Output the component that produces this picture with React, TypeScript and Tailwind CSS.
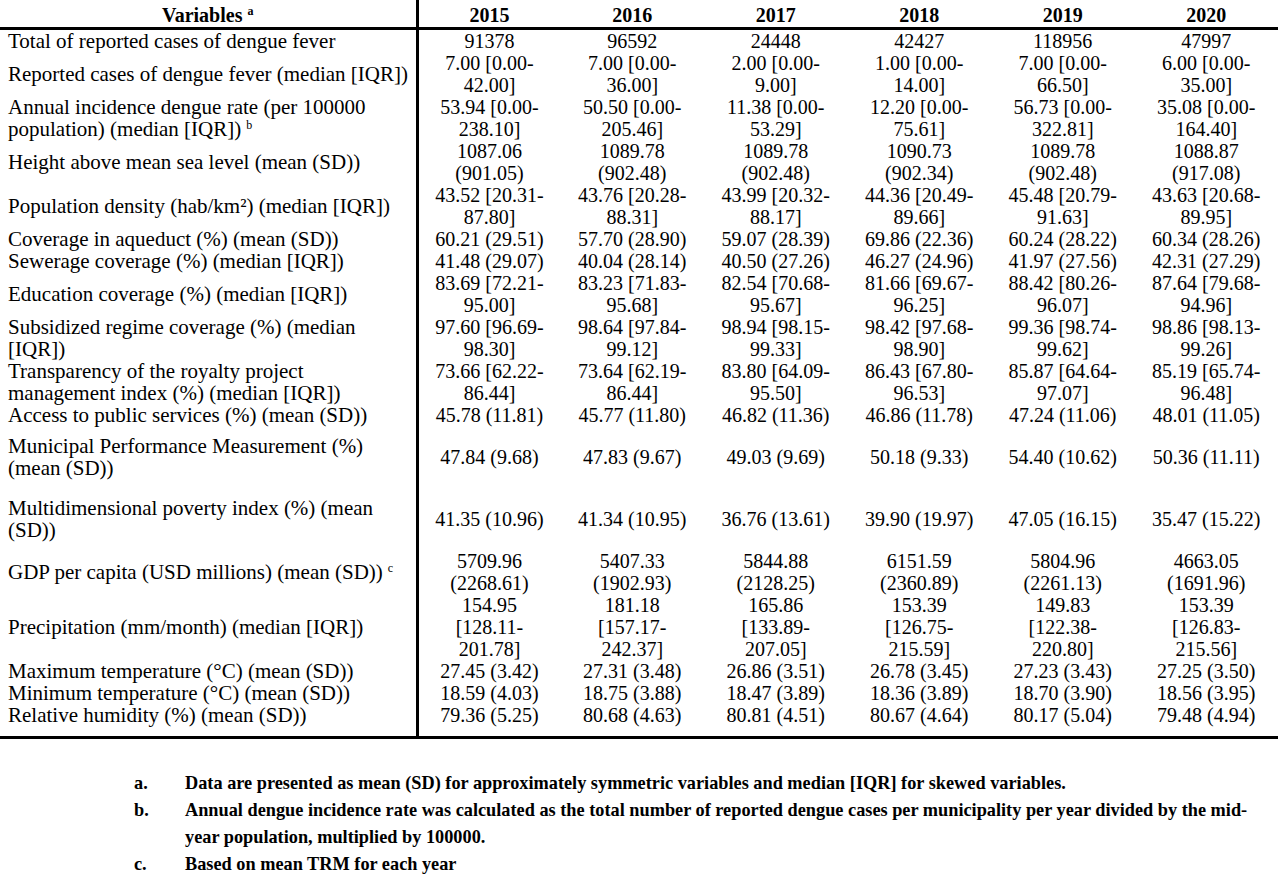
const years = ['2015', '2016', '2017', '2018', '2019', '2020'];

type Row = {
  label: string[];
  sup?: string;
  values: string[][];
  pad?: string;
};

const rows: Row[] = [
  {
    label: ['Total of reported cases of dengue fever'],
    values: [['91378'], ['96592'], ['24448'], ['42427'], ['118956'], ['47997']],
  },
  {
    label: ['Reported cases of dengue fever (median [IQR])'],
    values: [
      ['7.00 [0.00-', '42.00]'],
      ['7.00 [0.00-', '36.00]'],
      ['2.00 [0.00-', '9.00]'],
      ['1.00 [0.00-', '14.00]'],
      ['7.00 [0.00-', '66.50]'],
      ['6.00 [0.00-', '35.00]'],
    ],
  },
  {
    label: ['Annual incidence dengue rate (per 100000', 'population) (median [IQR])'],
    sup: 'b',
    values: [
      ['53.94 [0.00-', '238.10]'],
      ['50.50 [0.00-', '205.46]'],
      ['11.38 [0.00-', '53.29]'],
      ['12.20 [0.00-', '75.61]'],
      ['56.73 [0.00-', '322.81]'],
      ['35.08 [0.00-', '164.40]'],
    ],
  },
  {
    label: ['Height above mean sea level (mean (SD))'],
    values: [
      ['1087.06', '(901.05)'],
      ['1089.78', '(902.48)'],
      ['1089.78', '(902.48)'],
      ['1090.73', '(902.34)'],
      ['1089.78', '(902.48)'],
      ['1088.87', '(917.08)'],
    ],
  },
  {
    label: ['Population density (hab/km²) (median [IQR])'],
    values: [
      ['43.52 [20.31-', '87.80]'],
      ['43.76 [20.28-', '88.31]'],
      ['43.99 [20.32-', '88.17]'],
      ['44.36 [20.49-', '89.66]'],
      ['45.48 [20.79-', '91.63]'],
      ['43.63 [20.68-', '89.95]'],
    ],
  },
  {
    label: ['Coverage in aqueduct (%) (mean (SD))'],
    values: [['60.21 (29.51)'], ['57.70 (28.90)'], ['59.07 (28.39)'], ['69.86 (22.36)'], ['60.24 (28.22)'], ['60.34 (28.26)']],
  },
  {
    label: ['Sewerage coverage (%) (median [IQR])'],
    values: [['41.48 (29.07)'], ['40.04 (28.14)'], ['40.50 (27.26)'], ['46.27 (24.96)'], ['41.97 (27.56)'], ['42.31 (27.29)']],
  },
  {
    label: ['Education coverage (%) (median [IQR])'],
    values: [
      ['83.69 [72.21-', '95.00]'],
      ['83.23 [71.83-', '95.68]'],
      ['82.54 [70.68-', '95.67]'],
      ['81.66 [69.67-', '96.25]'],
      ['88.42 [80.26-', '96.07]'],
      ['87.64 [79.68-', '94.96]'],
    ],
  },
  {
    label: ['Subsidized regime coverage (%) (median', '[IQR])'],
    values: [
      ['97.60 [96.69-', '98.30]'],
      ['98.64 [97.84-', '99.12]'],
      ['98.94 [98.15-', '99.33]'],
      ['98.42 [97.68-', '98.90]'],
      ['99.36 [98.74-', '99.62]'],
      ['98.86 [98.13-', '99.26]'],
    ],
  },
  {
    label: ['Transparency of the royalty project', 'management index (%) (median [IQR])'],
    values: [
      ['73.66 [62.22-', '86.44]'],
      ['73.64 [62.19-', '86.44]'],
      ['83.80 [64.09-', '95.50]'],
      ['86.43 [67.80-', '96.53]'],
      ['85.87 [64.64-', '97.07]'],
      ['85.19 [65.74-', '96.48]'],
    ],
  },
  {
    label: ['Access to public services (%) (mean (SD))'],
    values: [['45.78 (11.81)'], ['45.77 (11.80)'], ['46.82 (11.36)'], ['46.86 (11.78)'], ['47.24 (11.06)'], ['48.01 (11.05)']],
  },
  {
    label: ['Municipal Performance Measurement (%)', '(mean (SD))'],
    values: [['47.84 (9.68)'], ['47.83 (9.67)'], ['49.03 (9.69)'], ['50.18 (9.33)'], ['54.40 (10.62)'], ['50.36 (11.11)']],
    pad: 'py-[9px]',
  },
  {
    label: ['Multidimensional poverty index (%) (mean', '(SD))'],
    values: [['41.35 (10.96)'], ['41.34 (10.95)'], ['36.76 (13.61)'], ['39.90 (19.97)'], ['47.05 (16.15)'], ['35.47 (15.22)']],
    pad: 'py-[9px]',
  },
  {
    label: ['GDP per capita (USD millions) (mean (SD))'],
    sup: 'c',
    values: [
      ['5709.96', '(2268.61)'],
      ['5407.33', '(1902.93)'],
      ['5844.88', '(2128.25)'],
      ['6151.59', '(2360.89)'],
      ['5804.96', '(2261.13)'],
      ['4663.05', '(1691.96)'],
    ],
  },
  {
    label: ['Precipitation (mm/month) (median [IQR])'],
    values: [
      ['154.95', '[128.11-', '201.78]'],
      ['181.18', '[157.17-', '242.37]'],
      ['165.86', '[133.89-', '207.05]'],
      ['153.39', '[126.75-', '215.59]'],
      ['149.83', '[122.38-', '220.80]'],
      ['153.39', '[126.83-', '215.56]'],
    ],
  },
  {
    label: ['Maximum temperature (°C) (mean (SD))'],
    values: [['27.45 (3.42)'], ['27.31 (3.48)'], ['26.86 (3.51)'], ['26.78 (3.45)'], ['27.23 (3.43)'], ['27.25 (3.50)']],
  },
  {
    label: ['Minimum temperature (°C) (mean (SD))'],
    values: [['18.59 (4.03)'], ['18.75 (3.88)'], ['18.47 (3.89)'], ['18.36 (3.89)'], ['18.70 (3.90)'], ['18.56 (3.95)']],
  },
  {
    label: ['Relative humidity (%) (mean (SD))'],
    values: [['79.36 (5.25)'], ['80.68 (4.63)'], ['80.81 (4.51)'], ['80.67 (4.64)'], ['80.17 (5.04)'], ['79.48 (4.94)']],
    pad: 'pb-[10px]',
  },
];

export default function App() {
  return (
    <div className="w-[1280px] h-[876px] bg-white text-black font-['Liberation_Serif',serif] overflow-hidden">
      <table className="w-[1278px] border-collapse table-fixed border-b-[3px] border-black">
        <colgroup>
          <col className="w-[417px]" />
          {years.map((y) => (
            <col key={y} />
          ))}
        </colgroup>
        <thead>
          <tr className="border-b-[3px] border-black">
            <th className="h-[28px] p-0 pt-[3px] border-r-[3px] border-black text-[20px] leading-[22px] font-bold text-center">
              Variables{' '}
              <span className="relative -top-[7px] text-[12px] leading-none">a</span>
            </th>
            {years.map((y) => (
              <th key={y} className="h-[28px] p-0 pt-[3px] text-[20px] leading-[22px] font-bold text-center">
                {y}
              </th>
            ))}
          </tr>
        </thead>
        <tbody>
          {rows.map((row, i) => (
            <tr key={i}>
              <td className={`p-0 pl-[8px] border-r-[3px] border-black align-middle text-[21px] leading-[22px] whitespace-nowrap ${row.pad ?? ''}`}>
                {row.label.map((line, j) => (
                  <div key={j}>
                    {line}
                    {row.sup && j === row.label.length - 1 && (
                      <span className="relative -top-[7px] ml-[5px] text-[12px] leading-none">{row.sup}</span>
                    )}
                  </div>
                ))}
              </td>
              {row.values.map((v, k) => (
                <td key={k} className={`p-0 text-center align-middle text-[20px] leading-[22px] whitespace-nowrap ${row.pad ?? ''}`}>
                  {v.map((line, j) => (
                    <div key={j}>{line}</div>
                  ))}
                </td>
              ))}
            </tr>
          ))}
        </tbody>
      </table>

      <ol className="mt-[31px] font-bold text-[18.3px] leading-[27px]">
        <li className="flex">
          <span className="w-[185px] pl-[134px] shrink-0">a.</span>
          <span>Data are presented as mean (SD) for approximately symmetric variables and median [IQR] for skewed variables.</span>
        </li>
        <li className="flex">
          <span className="w-[185px] pl-[134px] shrink-0">b.</span>
          <div className="whitespace-nowrap">
            <div>
              Annual dengue incidence rate was calculated as the total number of reported dengue cases per municipality per year divided by the mid-
            </div>
            <div>year population, multiplied by 100000.</div>
          </div>
        </li>
        <li className="flex">
          <span className="w-[185px] pl-[134px] shrink-0">c.</span>
          <span>Based on mean TRM for each year</span>
        </li>
      </ol>
    </div>
  );
}
